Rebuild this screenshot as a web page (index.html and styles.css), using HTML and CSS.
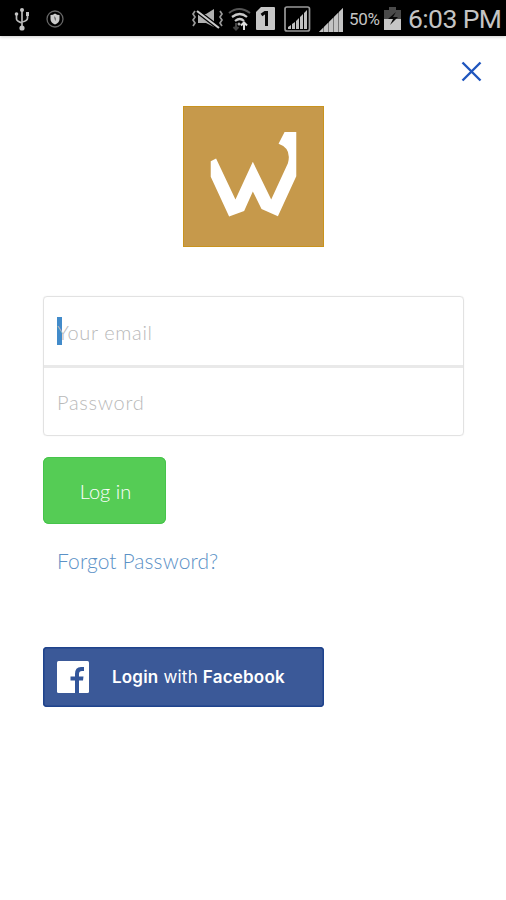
FILE: index.html
```
<!DOCTYPE html>
<html lang="en">
<head>
<meta charset="utf-8">
<title>Log in</title>
<link rel="stylesheet" href="styles.css">
</head>
<body>
<header class="status">
  <svg class="usb" width="16" height="24" viewBox="0 0 16 24" fill="none" stroke="#b8b8b8" stroke-width="1.700"><path d="M8 3v18M2.500 8v4q0 2 5.500 4M13.500 7v4q0 3-5.500 4"/><g fill="#c4c4c4" stroke="none"><circle cx="8" cy="3" r="2"/><circle cx="8" cy="21" r="2.600"/><circle cx="2.500" cy="7" r="1.800"/><path d="M12 5h3v4h-3z"/></g></svg>
  <svg class="shield" width="18" height="18" viewBox="0 0 18 18"><circle cx="9" cy="9" r="8" fill="none" stroke="#666" stroke-width="1.300"/><path d="M4.500 5q2.500 0 4.500-1.500Q11 5 13.500 5v4q0 3.500-4.500 5.500-4.500-2-4.500-5.500z" fill="#ccc"/><path d="M8 6l2 2v3q-2-1-2-5z" fill="#777"/></svg>
  <span class="spacer"></span>
  <svg class="mute" width="33" height="22" viewBox="0 0 33 22" fill="none" stroke="#999" stroke-width="1.700"><path d="M4 3L2 6l2 3-2 3 2 3-2 3M29 3l2 3-2 3 2 3-2 3 2 3"/><path d="M7 6h8l8-5v18l-8-4H7z" fill="#b0b0b0" stroke="none"/><path d="M6 3l22 17" stroke="#000" stroke-width="4.500"/><path d="M6 3l22 17" stroke="#ccc" stroke-width="2.200"/></svg>
  <svg class="wifi" width="23" height="24" viewBox="0 0 23 24" fill="none"><path d="M1 6q10-8 21 0" stroke="#555" stroke-width="2"/><path d="M4 10q8-6 15 0M7 14q5-4 9 0" stroke="#c8c8c8" stroke-width="2.200"/><circle cx="11" cy="17" r="1.500" fill="#aaa"/><path d="M8 16v6M5.500 20L8 22.500l2.500-2.500" stroke="#444" stroke-width="2"/><path d="M16 23v-7M13 18.500l3-3 3 3" stroke="#ddd" stroke-width="2"/></svg>
  <span class="sim"><svg width="19" height="23" viewBox="0 0 19 23"><path d="M5 0h13q1 0 1 1v21q0 1-1 1H1q-1 0-1-1V5z" fill="#c6c6c6"/><path d="M5.500 8L9 5.500h1.500V19" fill="none" stroke="#080808" stroke-width="3"/></svg></span>
  <svg class="boxed" width="27" height="26" viewBox="0 0 27 26"><rect x="1" y="1" width="24.500" height="24" rx="2" fill="none" stroke="#999" stroke-width="1.700"/><path d="M4 23v-2l3-2v4zM8 23v-5l3-2v7zM12 23v-8l3-3v11zM16 23V11l3-3v15zM20 23V7l3-3v19z" fill="#c0c0c0"/></svg>
  <svg class="signal" width="24" height="24" viewBox="0 0 24 24"><path d="M0 24L24 0v24z" fill="#777"/><path d="M0 24l4-4v4zM5 24v-5l4-4v9zM10 24V14l4-4v14zM15 24V9l4-4v19zM20 24V4l4-4v24z" fill="#c4c4c4"/></svg>
  <span class="percent">50%</span>
  <svg class="battery" width="17" height="23" viewBox="0 0 17 23"><path d="M0 3h5V0h7v3h5v9H0z" fill="#4a4a4a"/><path d="M0 12h17v11H0z" fill="#c6c6c6"/><path d="M12 5l-8 7h5l-3 6 8-8H9z" fill="#090909"/></svg>
  <span class="time">6:03 PM</span>
</header>
<main>
  <button class="close" aria-label="Close"><svg width="21" height="21" viewBox="0 0 21 21"><path d="M1.500 1.500l18 18M19.500 1.500l-18 18" fill="none" stroke="#1f55be" stroke-width="2.400"/></svg></button>
  <svg class="logo" viewBox="24 24 422 422"><path d="M24 24h422v422H24z" fill="#c6994b"/><path d="M25.500 25.500h419v419h-419z" fill="none" stroke="#c9931e" stroke-width="3"/><path d="M107 189L123 181 181 304 233 191 288 304 338 195Q350 151 310 137L328 102H363V234L308 354 259 332 233 280 207 338 162 355 107 236Z" fill="#fff"/></svg>
  <form class="fields">
    <div class="field"><span class="caret"></span><span class="email">Your email</span></div>
    <div class="field"><span class="pass">Password</span></div>
  </form>
  <button class="login"><span>Log in</span></button>
  <a class="forgot">Forgot Password?</a>
  <button class="facebook"><svg width="32" height="32" viewBox="0 0 32 32"><rect width="32" height="32" rx="1.500" fill="#fff"/><path d="M18 32V19.500h-4.500v-4H18V13q0-7 6-7h3v4h-2q-3 0-3 3v2.500h4.500l-.500 4H22V32z" fill="#32559a"/></svg><span class="fbtext"><b>Login</b> with <b>Facebook</b></span></button>
</main>
</body>
</html>
```
FILE: styles.css
```
* { box-sizing: border-box; }
body { margin: 0; width: 506px; height: 900px; background: #fff; font-family: Lato, sans-serif; overflow: hidden; }
button { border: 0; padding: 0; font: inherit; }
svg { display: block; flex: none; }
.status { height: 36px; display: flex; align-items: flex-start; background: #000; color: #c4c4c4; font-family: Roboto, sans-serif; box-shadow: 0 1px 3px #ccc; }
.usb { margin: 7px 0 0 14px; }
.shield { margin: 10px 0 0 16px; }
.spacer { flex: 1; }
.mute { margin: 8px 4px 0 0; }
.wifi { margin: 7px 5px 0 0; }
.sim { margin: 7px 9px 0 0; }
.boxed { margin: 6px 8px 0 0; }
.signal { margin: 8px 6px 0 0; }
.percent { width: 35px; font-size: 17px; line-height: 38px; letter-spacing: -0.35px; white-space: nowrap; }
.battery { margin: 7px 7px 0 0; }
.time { width: 98px; font-size: 26.5px; line-height: 37px; letter-spacing: -0.6px; white-space: nowrap; }
main { display: flex; flex-direction: column; align-items: flex-start; padding: 25px 42px 0; }
.close { align-self: flex-end; margin-right: -18px; background: none; }
.logo { width: 141px; height: 141px; margin: 24px 0 0 141px; }
.fields { margin: 49px 0 0 1px; width: 421px; height: 140px; border: 1px solid #e2e2e2; border-radius: 4px; box-shadow: 0 0 1px #e2e2e2; }
.field { height: 70px; padding-left: 13px; display: flex; align-items: center; position: relative; color: #b9b9b9; font-size: 20px; font-weight: 300; }
.field + .field { height: 70px; border-top: 3px solid #e9e9e9; margin-top: -2px; }
.caret { position: absolute; left: 13px; top: 20px; width: 5px; height: 28px; background: #428bca; }
.email { position: relative; letter-spacing: 0.65px; }
.pass { letter-spacing: 0.7px; }
.login { margin: 21px 0 0 1px; width: 123px; height: 67px; border-radius: 6px; background: #55cc55; box-shadow: inset 0 0 0 1px #46c44b; color: #fff; font-size: 20px; font-weight: 300; }
.login span { position: relative; left: 1px; }
.forgot { margin: 24px 0 0 15px; font-size: 21px; line-height: 26px; font-weight: 300; color: #5b91c6; letter-spacing: 0.1px; }
.facebook { margin: 73px 0 0 1px; width: 281px; height: 60px; border-radius: 4px; background: #3b5998; box-shadow: inset 0 0 0 1.5px #1f438c; display: flex; align-items: center; padding-left: 14px; color: #fff; }
.fbtext { margin-left: 23px; font-family: Inter, sans-serif; font-size: 17px; letter-spacing: 0.2px; white-space: nowrap; }
.fbtext b { font-weight: 600; }
```
